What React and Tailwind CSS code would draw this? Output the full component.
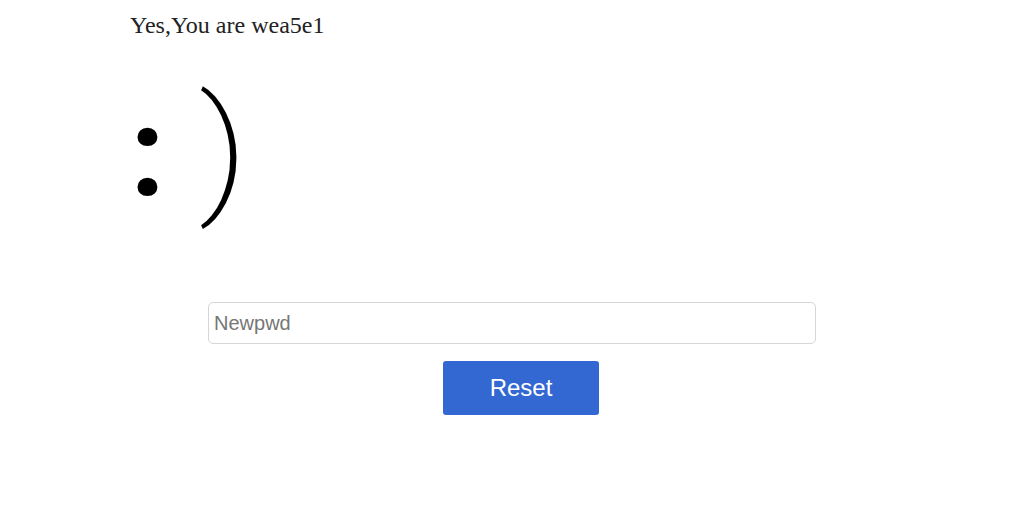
export default function App() {
  return (
    <div className="w-[1016px] h-[522px] bg-white overflow-hidden">
      <div className="pl-[130px] pt-[11px]">
        <p className="text-[24px] leading-[28px] text-[#222] font-['Liberation_Serif',serif]">
          Yes,You are wea5e1
        </p>
        <div className="mt-[40px] h-[170px] flex items-start text-black font-['Roboto',sans-serif]">
          <span className="mt-[11px] text-[125px] leading-none font-bold">:</span>
          <span className="mt-[1px] ml-[37px] text-[139px] leading-none font-extralight scale-x-115">)</span>
        </div>
      </div>
      <div className="mt-[53px] flex flex-col items-center">
        <input
          placeholder="Newpwd"
          className="w-[608px] h-[42px] ml-[8px] border border-[#d6d6d6] rounded-[5px] px-[5px] text-[20px] placeholder-[#767676] outline-none font-['Liberation_Sans',Arial,sans-serif]"
        />
        <button className="mt-[17px] ml-[26px] w-[156px] h-[54px] bg-[#3367d1] text-white rounded-[3px] text-[24px] font-['Liberation_Sans',Arial,sans-serif]">
          Reset
        </button>
      </div>
    </div>
  );
}
